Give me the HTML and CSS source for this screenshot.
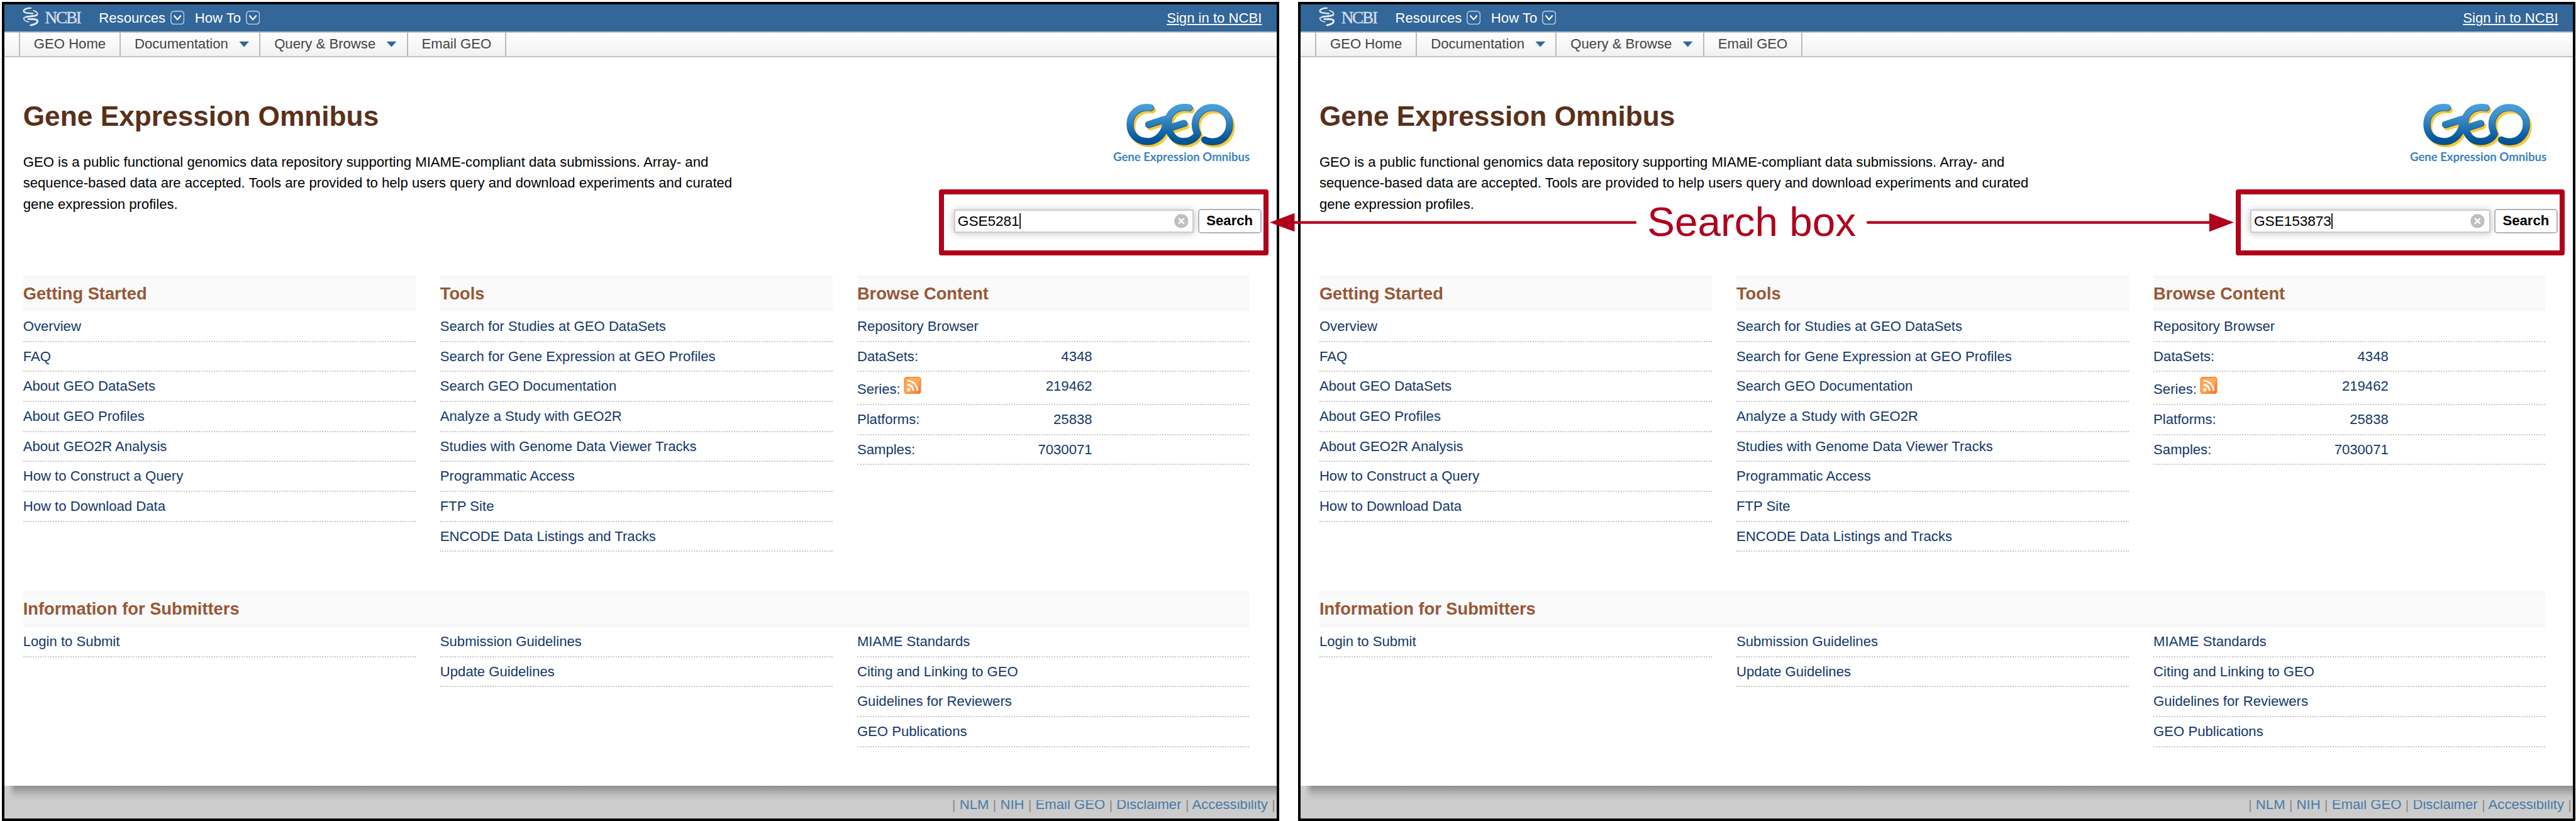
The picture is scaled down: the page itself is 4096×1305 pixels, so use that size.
FILE: index.html
```html
<!DOCTYPE html>
<html lang="en">
<head>
<meta charset="utf-8">
<title>Gene Expression Omnibus</title>
<link rel="stylesheet" href="styles.css">
</head>
<body>
<svg class="defs" width="0" height="0" aria-hidden="true">
  <defs>
    <linearGradient id="geo-blue" gradientUnits="userSpaceOnUse" x1="0" y1="90" x2="0" y2="290">
      <stop offset="0" stop-color="#4a9fdc"/><stop offset=".3" stop-color="#3f90cc"/><stop offset=".85" stop-color="#05599b"/><stop offset="1" stop-color="#05508c"/>
    </linearGradient>
    <linearGradient id="rss-orange" x1="0" y1="0" x2="1" y2="1">
      <stop offset="0" stop-color="#ffa245"/><stop offset=".5" stop-color="#ffad5c"/><stop offset="1" stop-color="#f9662b"/>
    </linearGradient>
    <symbol id="ncbi-mark" viewBox="0 0 78 96">
      <g fill="none" stroke="#e6edf5" stroke-linecap="round">
        <path d="M40 6C22 5 5 12 5 21C7 31 30 30 50 33" stroke-width="7"/>
        <path d="M54 18C66 22 76 30 72 38C64 48 24 42 6 54" stroke-width="6"/>
        <path d="M68 41C54 47 30 46 18 49" stroke-width="9"/>
        <path d="M5 54C4 64 16 71 30 74" stroke-width="4.5"/>
        <path d="M28 60C46 60 72 57 73 69C74 82 56 87 40 90" stroke-width="9"/>
      </g>
    </symbol>
    <symbol id="chev" viewBox="0 0 68 68">
      <rect x="2.5" y="2.5" width="63" height="63" rx="15" fill="none" stroke="#c3d2e2" stroke-width="4.5"/>
      <path d="M17 23L34 43L51 23" fill="none" stroke="#fff" stroke-width="6.5"/>
    </symbol>
    <g id="geo-strokes" fill="none" stroke-width="33" stroke-linecap="round" stroke-linejoin="round">
      <path d="M316 108C258 98 215 137 215 191C215 240 252 274 300 274C342 274 372 246 388 205L392 165"/>
      <path d="M306 191L392 163"/>
      <path d="M506 108C444 97 404 132 402 180C400 232 430 274 478 274C512 274 536 258 547 236C540 222 535 208 535 190C535 142 572 107 620 107C668 107 704 142 704 190C704 238 668 276 622 275C604 275 592 272 582 266"/>
      <path d="M396 212L480 185"/>
    </g>
    <symbol id="geo-logo" viewBox="0 0 900 420">
      <use href="#geo-strokes" stroke="#f6c93c" transform="translate(11 13)"/>
      <use href="#geo-strokes" stroke="#1d4a72" transform="translate(2 2)"/>
      <use href="#geo-strokes" stroke="url(#geo-blue)"/>
      <text x="133" y="370" class="geo-caption" textLength="671" lengthAdjust="spacingAndGlyphs">Gene Expression Omnibus</text>
    </symbol>
    <symbol id="clear" viewBox="0 0 24 24">
      <circle cx="12" cy="12" r="11.7" fill="#bfbfbf"/>
      <path d="M7.5 7.5L16.5 16.5M16.5 7.5L7.5 16.5" stroke="#fff" stroke-width="2.6" fill="none"/>
    </symbol>
    <symbol id="rss" viewBox="0 0 28 28">
      <rect x=".8" y=".8" width="26.4" height="26.4" rx="3.5" fill="url(#rss-orange)" stroke="#f58a2c" stroke-width="1.6"/>
      <circle cx="7.6" cy="21" r="2.6" fill="#fff"/>
      <path d="M5 12.7A10.3 10.3 0 0 1 15.3 23M5 6.2A17 17 0 0 1 22 23" fill="none" stroke="#fff" stroke-width="2.8"/>
    </symbol>
  </defs>
</svg>

<div class="stage">
  <section class="panel">
    <header class="topbar">
      <svg class="mark"><use href="#ncbi-mark"/></svg>
      <span class="ncbi">NCBI</span>
      <a class="top-link resources">Resources</a><svg class="chev"><use href="#chev"/></svg>
      <a class="top-link howto">How To</a><svg class="chev"><use href="#chev"/></svg>
      <a class="top-link signin">Sign in to NCBI</a>
    </header>
    <nav class="nav">
      <a class="tab">GEO Home</a><a class="tab menu">Documentation</a><a class="tab menu">Query &amp; Browse</a><a class="tab">Email GEO</a>
    </nav>
    <main class="main">
      <div class="hero">
        <div class="intro">
          <h1>Gene Expression Omnibus</h1>
          <p>GEO is a public functional genomics data repository supporting MIAME-compliant data submissions. Array- and<br>sequence-based data are accepted. Tools are provided to help users query and download experiments and curated<br>gene expression profiles.</p>
        </div>
        <div class="side">
          <svg class="geo-logo"><use href="#geo-logo"/></svg>
          <form class="search-frame">
            <div class="field"><span class="query">GSE5281</span><svg class="clear"><use href="#clear"/></svg></div>
            <button class="search-btn" type="button">Search</button>
          </form>
        </div>
      </div>
      <div class="columns first">
        <div><h2>Getting Started</h2>
          <ul><li>Overview</li><li>FAQ</li><li>About GEO DataSets</li><li>About GEO Profiles</li><li>About GEO2R Analysis</li><li>How to Construct a Query</li><li>How to Download Data</li></ul></div>
        <div><h2>Tools</h2>
          <ul><li>Search for Studies at GEO DataSets</li><li>Search for Gene Expression at GEO Profiles</li><li>Search GEO Documentation</li><li>Analyze a Study with GEO2R</li><li>Studies with Genome Data Viewer Tracks</li><li>Programmatic Access</li><li>FTP Site</li><li>ENCODE Data Listings and Tracks</li></ul></div>
        <div><h2>Browse Content</h2>
          <ul><li>Repository Browser</li><li class="stat"><span>DataSets:</span><b>4348</b></li><li class="stat series"><span>Series: <svg class="rss"><use href="#rss"/></svg></span><b>219462</b></li><li class="stat"><span>Platforms:</span><b>25838</b></li><li class="stat"><span>Samples:</span><b>7030071</b></li></ul></div>
      </div>
      <div class="submit">
        <h2>Information for Submitters</h2>
        <div class="columns">
          <ul><li>Login to Submit</li></ul>
          <ul><li>Submission Guidelines</li><li>Update Guidelines</li></ul>
          <ul><li>MIAME Standards</li><li>Citing and Linking to GEO</li><li>Guidelines for Reviewers</li><li>GEO Publications</li></ul>
        </div>
      </div>
    </main>
    <footer class="footer">| <a>NLM</a> | <a>NIH</a> | <a>Email GEO</a> | <a>Disclaimer</a> | <a>Accessibility</a> |</footer>
  </section>

  <section class="panel">
    <header class="topbar">
      <svg class="mark"><use href="#ncbi-mark"/></svg>
      <span class="ncbi">NCBI</span>
      <a class="top-link resources">Resources</a><svg class="chev"><use href="#chev"/></svg>
      <a class="top-link howto">How To</a><svg class="chev"><use href="#chev"/></svg>
      <a class="top-link signin">Sign in to NCBI</a>
    </header>
    <nav class="nav">
      <a class="tab">GEO Home</a><a class="tab menu">Documentation</a><a class="tab menu">Query &amp; Browse</a><a class="tab">Email GEO</a>
    </nav>
    <main class="main">
      <div class="hero">
        <div class="intro">
          <h1>Gene Expression Omnibus</h1>
          <p>GEO is a public functional genomics data repository supporting MIAME-compliant data submissions. Array- and<br>sequence-based data are accepted. Tools are provided to help users query and download experiments and curated<br>gene expression profiles.</p>
        </div>
        <div class="side">
          <svg class="geo-logo"><use href="#geo-logo"/></svg>
          <form class="search-frame">
            <div class="field"><span class="query">GSE153873</span><svg class="clear"><use href="#clear"/></svg></div>
            <button class="search-btn" type="button">Search</button>
          </form>
        </div>
      </div>
      <div class="columns first">
        <div><h2>Getting Started</h2>
          <ul><li>Overview</li><li>FAQ</li><li>About GEO DataSets</li><li>About GEO Profiles</li><li>About GEO2R Analysis</li><li>How to Construct a Query</li><li>How to Download Data</li></ul></div>
        <div><h2>Tools</h2>
          <ul><li>Search for Studies at GEO DataSets</li><li>Search for Gene Expression at GEO Profiles</li><li>Search GEO Documentation</li><li>Analyze a Study with GEO2R</li><li>Studies with Genome Data Viewer Tracks</li><li>Programmatic Access</li><li>FTP Site</li><li>ENCODE Data Listings and Tracks</li></ul></div>
        <div><h2>Browse Content</h2>
          <ul><li>Repository Browser</li><li class="stat"><span>DataSets:</span><b>4348</b></li><li class="stat series"><span>Series: <svg class="rss"><use href="#rss"/></svg></span><b>219462</b></li><li class="stat"><span>Platforms:</span><b>25838</b></li><li class="stat"><span>Samples:</span><b>7030071</b></li></ul></div>
      </div>
      <div class="submit">
        <h2>Information for Submitters</h2>
        <div class="columns">
          <ul><li>Login to Submit</li></ul>
          <ul><li>Submission Guidelines</li><li>Update Guidelines</li></ul>
          <ul><li>MIAME Standards</li><li>Citing and Linking to GEO</li><li>Guidelines for Reviewers</li><li>GEO Publications</li></ul>
        </div>
      </div>
    </main>
    <footer class="footer">| <a>NLM</a> | <a>NIH</a> | <a>Email GEO</a> | <a>Disclaimer</a> | <a>Accessibility</a> |</footer>
  </section>

  <div class="callout">
    <svg class="arrow" width="601" height="32" viewBox="0 0 601 32"><path d="M0 16L40.5 .7V31.3Z"/><path d="M38 13.8H599A2.2 2.2 0 0 1 599 18.2H38Z"/></svg>
    <span class="callout-text">Search box</span>
    <svg class="arrow" width="602" height="32" viewBox="0 0 602 32"><path d="M602 16L561.5 .7V31.3Z"/><path d="M564 13.8H2A2.2 2.2 0 0 0 2 18.2H564Z"/></svg>
  </div>
</div>
</body>
</html>
```
FILE: styles.css
```css
* { box-sizing: border-box; }

body {
  margin: 0;
  background: #fff;
  overflow: hidden;
  font-family: "Liberation Sans", Arial, Helvetica, sans-serif;
}

.defs { position: absolute; }

/* The two panels are laid out on a 4220px wide board */
.stage {
  zoom: 0.970616;
  position: relative;
  display: flex;
  align-items: flex-start;
  gap: 31px;
  width: 4220px;
  height: 1344px;
  padding: 2.7px 0 0 2.7px;
  font-size: 22.8px;
}

.panel {
  display: flex;
  flex-direction: column;
  flex: none;
  width: 2092.6px;
  height: 1341.7px;
  border: 4.13px solid #000;
  background: #fff;
}

/* Top bar */
.topbar {
  display: flex;
  align-items: flex-start;
  flex: none;
  height: 44.3px;
  padding-left: 30.3px;
  padding-right: 24px;
  background: #336699;
  color: #fff;
}
.mark { width: 26px; height: 32px; margin-top: 5px; }
.ncbi {
  width: 60px;
  margin: 7.4px 0 0 10.5px;
  font: 28px/30px "Liberation Serif", "Times New Roman", serif;
  color: #d3dfeb;
  letter-spacing: -2.2px;
  -webkit-text-stroke: .4px #d3dfeb;
}
.top-link { line-height: 30px; margin-top: 8px; white-space: nowrap; }
.resources { margin-left: 28.5px; }
.howto { margin-left: 17px; }
.chev { width: 23px; height: 23px; margin: 10.5px 0 0 8px; }
.signin { margin-left: auto; text-decoration: underline; text-underline-offset: 2px; text-decoration-thickness: 2px; }

/* Navigation tabs */
.nav {
  display: flex;
  flex: none;
  height: 42.5px;
  padding-left: 24px;
  border-top: 2.07px solid #b9bcc0;
  border-bottom: 2.07px solid #c4c4c4;
  background: linear-gradient(#fff, #f1f1f1);
}
.tab {
  display: flex;
  align-items: center;
  padding: 0 22.6px;
  border-left: 2.07px solid #bbb;
  line-height: 38px;
  color: #444;
  white-space: nowrap;
}
.tab:last-child { border-right: 2.07px solid #bbb; }
.menu { padding-right: 16.6px; }
.menu::after {
  content: "";
  width: 16.5px;
  height: 9.3px;
  margin: 0 0 0 17.8px;
  background: #336699;
  clip-path: polygon(0 0, 100% 0, 50% 100%);
}

/* Page body */
.main { position: relative; z-index: 1; flex: none; height: 1193.2px; background: #fff; }
.main::after {
  content: "";
  position: absolute;
  inset: auto 0 -24px 7px;
  height: 24px;
  background: linear-gradient(90deg, #ccc, rgba(204, 204, 204, 0) 12px), linear-gradient(#8e8e8e, #a4a4a4 30%, #c2c2c2 70%, #ccc);
}
.hero { display: flex; justify-content: space-between; height: 357.5px; padding-left: 31px; }
.intro { padding-top: 72.7px; white-space: nowrap; }
h1 { margin: 0; font-size: 45.6px; line-height: 50px; color: #5b3019; }
.intro p { margin: 32.2px 0 0; line-height: 34.3px; color: #000; }
.side { display: flex; flex-direction: column; align-items: flex-end; padding-top: 46.5px; }
.geo-logo { width: 300px; height: 140px; margin-right: 11.5px; }
.geo-caption { font: 700 56px Lato, sans-serif; fill: #3a84bd; }

.search-frame {
  display: flex;
  align-items: flex-start;
  width: 539px;
  height: 108.7px;
  margin: 30px 13.5px 0 0;
  padding: 23.6px 0 0 16px;
  border: 8.3px solid #b0001b;
  border-radius: 4px;
}
.field {
  display: flex;
  align-items: center;
  width: 393px;
  height: 38px;
  margin-top: 1px;
  padding: 0 7px 0 4px;
  border: 2.07px solid #ccc;
  background: #fff;
  box-shadow: 0 1px 12px rgba(0, 0, 0, .28);
}
.query { font-size: 23.4px; line-height: 26px; height: 26px; border-right: 2.07px solid #222; letter-spacing: -.1px; }
.clear { width: 23.5px; height: 23.5px; margin-left: auto; }
.search-btn {
  width: 104px;
  height: 40px;
  margin-left: 6.5px;
  padding: 0;
  border: 2.07px solid #b4b4b4;
  border-radius: 5px;
  background: #fff;
  color: #000;
  font: 700 22.8px/35px "Liberation Sans", Arial, sans-serif;
}

/* Link lists */
h2 {
  margin: 0;
  height: 58.7px;
  font-size: 28.1px;
  line-height: 59.9px;
  color: #985735;
  background: #fafafa;
  box-shadow: inset 0 6px #f7f7f7, inset 0 -6px #f7f7f7;
}
.columns { display: grid; grid-template-columns: 643px 643px 642px; column-gap: 40.2px; }
.first { height: 517.3px; padding-left: 31px; }
ul { margin: 1.2px 0 0; padding: 0; list-style: none; }
li {
  height: 49.1px;
  line-height: 47.1px;
  border-bottom: 2.07px dotted #c8c8c8;
  color: #14376c;
  white-space: nowrap;
}
.stat { display: flex; }
.stat span { width: 200px; }
.stat b { width: 185px; font-weight: 400; text-align: right; }
.series { height: 54.3px; }
.series span { line-height: 57.1px; }
.rss { width: 29px; height: 28px; margin-left: -1px; vertical-align: baseline; }
.submit { width: 2039.4px; padding-left: 31px; }
.submit h2 { line-height: 57px; }
.submit .columns ul { margin-top: 0; }

/* Footer */
.footer {
  flex: 1;
  padding-right: 2px;
  background: #ccc;
  color: #8a8a8a;
  text-align: right;
  line-height: 62px;
  white-space: nowrap;
  height: 54px;
}
.footer a { color: #4a7aa8; }

/* Annotation laid over both panels */
.callout {
  position: absolute;
  z-index: 2;
  left: 2080px;
  top: 324px;
  display: flex;
  align-items: center;
  width: 1580px;
  height: 81px;
  justify-content: space-between;
}
.arrow { flex: none; fill: #b0001b; }
.callout-text { font-size: 67.6px; line-height: 81px; color: #b0001b; white-space: nowrap; }
```
